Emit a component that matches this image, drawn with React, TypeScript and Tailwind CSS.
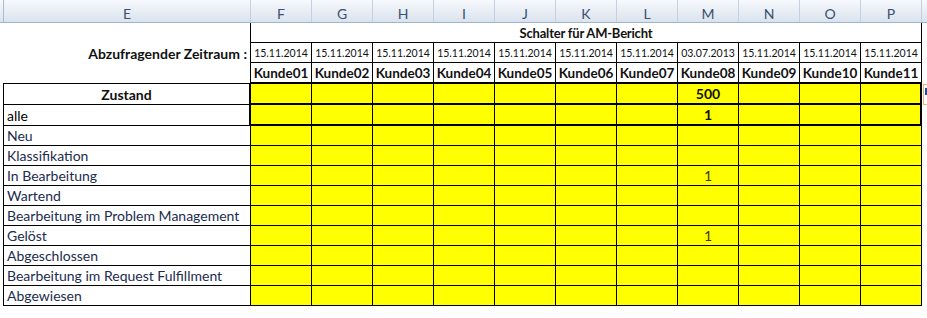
import React from "react";

const COLS = ["F", "G", "H", "I", "J", "K", "L", "M", "N", "O", "P"];
const DATES = COLS.map((c) => (c === "M" ? "03.07.2013" : "15.11.2014"));
const KUNDEN = COLS.map((_, i) => `Kunde${String(i + 1).padStart(2, "0")}`);

const ROWS: { label: string; m?: string }[] = [
  { label: "Neu" },
  { label: "Klassifikation" },
  { label: "In Bearbeitung", m: "1" },
  { label: "Wartend" },
  { label: "Bearbeitung im Problem Management" },
  { label: "Gelöst", m: "1" },
  { label: "Abgeschlossen" },
  { label: "Bearbeitung im Request Fulfillment" },
  { label: "Abgewiesen" },
];

export default function App() {
  return (
    <div className="w-[927px] h-[318px] bg-white overflow-hidden font-[Lato,sans-serif] text-black">
      {/* column letters */}
      <div className="flex h-[23px] bg-linear-to-b from-[#f7f9fc] to-[#dae3ee] border-b border-[#9fb5cc] text-[14px] text-[#3c4f6e]">
        <div className="w-[4px] shrink-0 border-r border-[#a9bcd2]" />
        <div className="w-[247px] shrink-0 border-r border-[#c3d1e1] flex items-center justify-center pt-[4px]">E</div>
        {COLS.map((c) => (
          <div key={c} className="w-[61px] shrink-0 border-r border-[#c3d1e1] flex items-center justify-center pt-[4px]">
            {c}
          </div>
        ))}
        <div className="flex-1" />
      </div>

      {/* Schalter row */}
      <div className="flex h-[20px]">
        <div className="w-[3px] shrink-0" />
        <div className="w-[248px] shrink-0 border-r border-black" />
        <div className="w-[671px] shrink-0 border-r border-b border-black flex items-end justify-center text-[13px] tracking-[-0.2px] font-bold leading-[18px] text-[#111]">
          Schalter für AM-Bericht
        </div>
        <div className="flex-1" />
      </div>

      {/* dates row */}
      <div className="flex h-[20px]">
        <div className="w-[3px] shrink-0" />
        <div className="w-[248px] shrink-0 border-r border-black flex items-end justify-end pr-[3px] text-[14px] font-bold leading-[18px] text-[#111]">
          Abzufragender Zeitraum :
        </div>
        {DATES.map((d, i) => (
          <div key={i} className="w-[61px] shrink-0 border-r border-b border-black flex items-end justify-center text-[10.5px] leading-[17px] text-[#111]">
            {d}
          </div>
        ))}
        <div className="flex-1" />
      </div>

      {/* Kunde row */}
      <div className="flex h-[21px]">
        <div className="w-[3px] shrink-0" />
        <div className="w-[248px] shrink-0 border-r border-b border-black" />
        {KUNDEN.map((k) => (
          <div key={k} className="w-[61px] shrink-0 border-r border-b-2 border-black flex items-end justify-center text-[13.5px] font-bold leading-[17px] text-[#111]">
            {k}
          </div>
        ))}
        <div className="flex-1" />
      </div>

      {/* Zustand row */}
      <div className="flex h-[21px]">
        <div className="w-[3px] shrink-0" />
        <div className="w-[248px] shrink-0 border-l border-r-2 border-b border-black flex items-end justify-center text-[14px] font-bold leading-[18px] text-[#111]">
          Zustand
        </div>
        {COLS.map((c) => (
          <div
            key={c}
            className={
              c === "P"
                ? "w-[61px] shrink-0 bg-[#ffff00] border-r-2 border-b-2 border-black"
                : "w-[61px] shrink-0 bg-[#ffff00] border-r border-b-2 border-black flex items-end justify-center text-[14px] font-bold leading-[18px] text-[#111]"
            }
          >
            {c === "M" ? "500" : ""}
          </div>
        ))}
        <div className="flex-1 pl-[1px] overflow-hidden">
          <div className="h-[21px] w-[8px] border border-[#f0b36e] bg-white">
            <div className="ml-[1px] mt-[3px] w-[2px] h-[7px] bg-[#2a4c9e]" />
          </div>
        </div>
      </div>

      {/* alle row */}
      <div className="flex h-[21px]">
        <div className="w-[3px] shrink-0" />
        <div className="w-[248px] shrink-0 border-l border-r-2 border-b border-black flex items-end pl-[3px] text-[14px] leading-[18px] text-black">
          alle
        </div>
        {COLS.map((c) => (
          <div
            key={c}
            className={
              c === "P"
                ? "w-[61px] shrink-0 bg-[#ffff00] border-r-2 border-b-2 border-black"
                : "w-[61px] shrink-0 bg-[#ffff00] border-r border-b-2 border-black flex items-end justify-center text-[14px] font-bold leading-[18px] text-[#111]"
            }
          >
            {c === "M" ? "1" : ""}
          </div>
        ))}
        <div className="flex-1" />
      </div>

      {ROWS.map((r) => (
        <div key={r.label} className="flex h-[20px]">
          <div className="w-[3px] shrink-0" />
          <div className="w-[248px] shrink-0 border-l border-r border-b border-black flex items-end pl-[3px] text-[14px] leading-[18px] text-[#1b2c4e] whitespace-nowrap">
            {r.label}
          </div>
          {COLS.map((c) => (
            <div
              key={c}
              className="w-[61px] shrink-0 bg-[#ffff00] border-r border-b border-black flex items-end justify-center text-[14px] leading-[18px] text-[#3d3710]"
            >
              {c === "M" && r.m ? r.m : ""}
            </div>
          ))}
          <div className="flex-1" />
        </div>
      ))}
    </div>
  );
}
